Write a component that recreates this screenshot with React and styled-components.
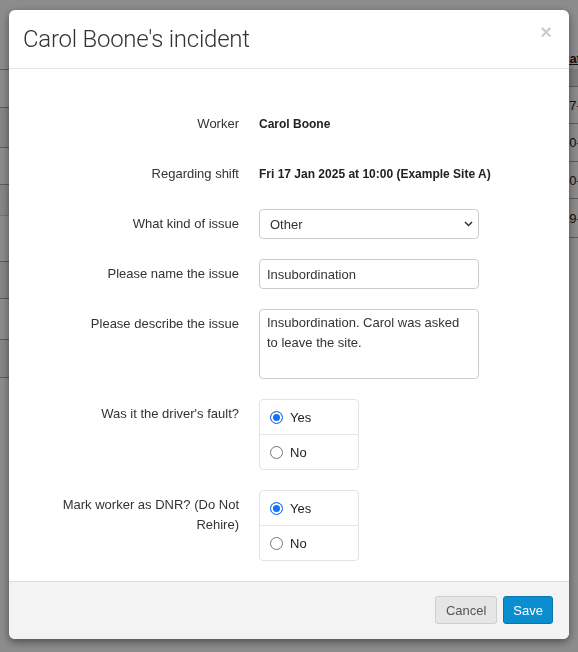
import React from 'react';
import styled, { createGlobalStyle, css } from 'styled-components';

const GlobalStyle = createGlobalStyle`
  html, body {
    margin: 0;
    padding: 0;
    height: 100%;
    overflow: hidden;
  }
  body {
    background: #fff;
    color: #333;
    font-family: "Liberation Sans", Arial, sans-serif;
    font-size: 13px;
  }
`;

// --- page behind the dialog ---

const Page = styled.div`
  display: grid;
  grid-template-columns: 300px 1fr;
  height: 652px;
`;

const SideList = styled.div`
  padding-top: 69px;
`;

const SideRow = styled.div`
  height: ${p => p.$h}px;
  box-sizing: border-box;
  border-top: 1px solid ${p => (p.$light ? '#d2d2d2' : '#a6a6a6')};
  background: ${p => (p.$striped ? '#f4f4f4' : '#fff')};
`;

const Table = styled.div`
  padding-top: 48px;
`;

const TableRow = styled.div`
  display: grid;
  grid-template-columns: 262px 1fr;
  align-items: center;
  height: ${p => p.$h}px;
  box-sizing: border-box;
  border-bottom: 1px solid #a6a6a6;
  white-space: nowrap;
  color: #222;
`;

const HeadRow = styled(TableRow)`
  border-bottom: none;
  font-weight: bold;
  a {
    margin-left: -2px;
    color: #222;
    text-decoration: underline;
  }
`;

const FilterRow = styled.div`
  height: 18px;
  box-sizing: border-box;
  background: #e4e4e4;
  border-bottom: 1px solid #a6a6a6;
`;

// --- dialog ---

const Backdrop = styled.div`
  position: fixed;
  inset: 0;
  background: rgba(0, 0, 0, 0.45);
  display: flex;
  justify-content: center;
  align-items: flex-start;
  padding-top: 10px;
`;

const Modal = styled.div`
  width: 560px;
  background: #fff;
  border-radius: 6px;
  box-shadow: 0 3px 9px rgba(0, 0, 0, 0.45);
  overflow: hidden;
`;

const Header = styled.div`
  display: flex;
  justify-content: space-between;
  align-items: flex-start;
  padding: 15px 15px 15px 14px;
  border-bottom: 1px solid #e5e5e5;
`;

const Title = styled.h3`
  margin: 0;
  font-family: Roboto, "Liberation Sans", sans-serif;
  font-weight: 300;
  font-size: 24px;
  line-height: 28px;
  letter-spacing: -0.25px;
  color: #333;
`;

const Close = styled.button`
  margin: -3px 2px 0 0;
  padding: 0;
  border: none;
  background: none;
  font-family: "Liberation Sans", Arial, sans-serif;
  font-size: 20px;
  font-weight: bold;
  line-height: 20px;
  color: #000;
  opacity: 0.2;
  cursor: pointer;
`;

const Body = styled.div`
  padding: 40px 15px 0;
`;

const Row = styled.div`
  display: grid;
  grid-template-columns: 215px 220px;
  column-gap: 20px;
  margin-bottom: 20px;
`;

const Label = styled.label`
  text-align: right;
  padding-top: 5px;
  line-height: 20px;
  color: #333;
`;

const Static = styled.div`
  padding: 5px 0;
  line-height: 20px;
  font-size: 12px;
  font-weight: bold;
  color: #222;
  white-space: nowrap;
`;

const field = css`
  box-sizing: border-box;
  width: 100%;
  border: 1px solid #ccc;
  border-radius: 4px;
  background: #fff;
  color: #333;
  font-family: "Liberation Sans", Arial, sans-serif;
  font-size: 13px;
  outline: none;
`;

const SelectWrap = styled.div`
  position: relative;
`;

const Select = styled.select`
  ${field}
  appearance: none;
  height: 30px;
  padding: 0 24px 0 10px;
`;

const Chevron = styled.svg`
  position: absolute;
  right: 6px;
  top: 12px;
  pointer-events: none;
`;

const Input = styled.input`
  ${field}
  height: 30px;
  padding: 0 7px;
`;

const TextArea = styled.textarea`
  ${field}
  display: block;
  height: 70px;
  padding: 3px 7px;
  line-height: 20px;
  resize: none;
`;

const RadioGroup = styled.div`
  box-sizing: border-box;
  width: 100px;
  border: 1px solid #e3e3e3;
  border-radius: 4px;
`;

const RadioOption = styled.label`
  display: flex;
  align-items: center;
  gap: 7px;
  height: 34px;
  padding: 0 10px;
  color: #222;
  & + & {
    border-top: 1px solid #e6e6e6;
  }
`;

const Radio = styled.input`
  appearance: none;
  margin: 0;
  width: 13px;
  height: 13px;
  border-radius: 50%;
  border: 1px solid #767676;
  background: #fff;
  &:checked {
    border-color: #1670f5;
    background: #1670f5;
    box-shadow: inset 0 0 0 2px #fff;
  }
`;

const Footer = styled.div`
  display: flex;
  justify-content: flex-end;
  gap: 6px;
  padding: 14px 16px 15px;
  background: #f3f3f3;
  border-top: 1px solid #dcdcdc;
`;

const Button = styled.button`
  height: 28px;
  padding: 0 ${p => (p.$primary ? 9 : 10)}px;
  border-radius: 3px;
  border: 1px solid;
  font-family: "Liberation Sans", Arial, sans-serif;
  font-size: 13px;
  cursor: pointer;
  ${p =>
    p.$primary
      ? css`
          background: #0b8ecf;
          border-color: #0876ad;
          color: #fff;
        `
      : css`
          background: #e6e6e6;
          border-color: #cfcfcf;
          color: #555;
        `}
`;

const sideRows = [
  { h: 38 }, { h: 40, striped: true }, { h: 37 }, { h: 31, striped: true },
  { h: 46, light: true }, { h: 37, striped: true }, { h: 41 }, { h: 38, striped: true }, { h: 40 },
];

const dates = [
  { text: '17-01-2025', h: 37 },
  { text: '10-01-2025', h: 38 },
  { text: '20-12-2024', h: 37 },
  { text: '09-12-2024', h: 39 },
];

const YesNo = ({ name }) => (
  <RadioGroup>
    <RadioOption>
      <Radio type="radio" name={name} defaultChecked />
      Yes
    </RadioOption>
    <RadioOption>
      <Radio type="radio" name={name} />
      No
    </RadioOption>
  </RadioGroup>
);

export default function App() {
  return (
    <>
      <GlobalStyle />
      <Page>
        <SideList>
          {sideRows.map((r, i) => (
            <SideRow key={i} $h={r.h} $light={r.light} $striped={r.striped} />
          ))}
        </SideList>
        <Table>
          <HeadRow $h={21}>
            <span />
            <a>Date</a>
          </HeadRow>
          <FilterRow />
          {dates.map(d => (
            <TableRow key={d.text} $h={d.h}>
              <span />
              <span>{d.text}</span>
            </TableRow>
          ))}
        </Table>
      </Page>

      <Backdrop>
        <Modal>
          <Header>
            <Title>Carol Boone's incident</Title>
            <Close aria-label="Close">×</Close>
          </Header>

          <Body>
            <Row>
              <Label>Worker</Label>
              <Static>Carol Boone</Static>
            </Row>
            <Row>
              <Label>Regarding shift</Label>
              <Static>Fri 17 Jan 2025 at 10:00 (Example Site A)</Static>
            </Row>
            <Row>
              <Label>What kind of issue</Label>
              <SelectWrap>
                <Select defaultValue="other">
                  <option value="late">Late</option>
                  <option value="noshow">No show</option>
                  <option value="other">Other</option>
                </Select>
                <Chevron width="9" height="6" viewBox="0 0 9 6">
                  <path d="M1 1 L4.5 4.5 L8 1" fill="none" stroke="#333" strokeWidth="1.5" />
                </Chevron>
              </SelectWrap>
            </Row>
            <Row>
              <Label>Please name the issue</Label>
              <Input defaultValue="Insubordination" />
            </Row>
            <Row>
              <Label>Please describe the issue</Label>
              <TextArea defaultValue="Insubordination. Carol was asked to leave the site." />
            </Row>
            <Row>
              <Label>Was it the driver's fault?</Label>
              <YesNo name="fault" />
            </Row>
            <Row>
              <Label>Mark worker as DNR? (Do Not Rehire)</Label>
              <YesNo name="dnr" />
            </Row>
          </Body>

          <Footer>
            <Button>Cancel</Button>
            <Button $primary>Save</Button>
          </Footer>
        </Modal>
      </Backdrop>
    </>
  );
}
